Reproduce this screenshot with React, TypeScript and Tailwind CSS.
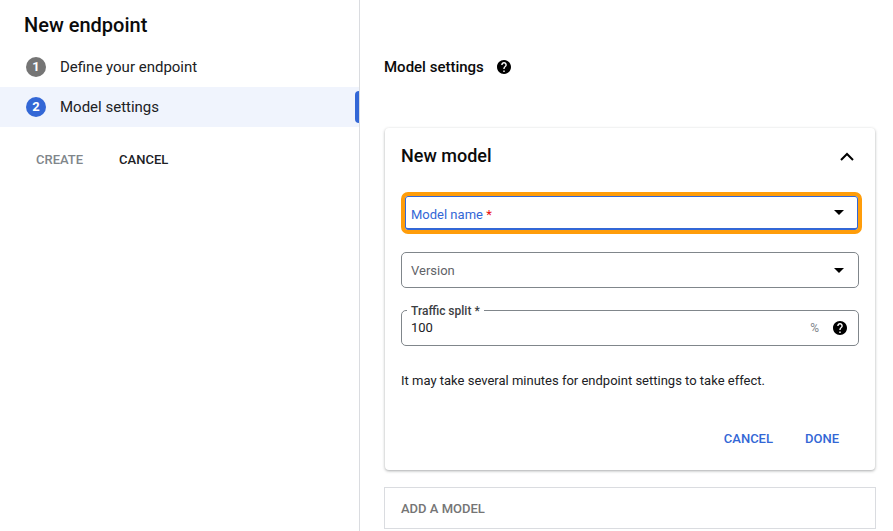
import React from 'react';

function HelpIcon({ size = 16 }: { size?: number }) {
    return (
        <svg width={size} height={size} viewBox="2 2 20 20" fill="#000" className="shrink-0">
            <path d="M12 2C6.48 2 2 6.48 2 12s4.48 10 10 10 10-4.48 10-10S17.52 2 12 2zm1 17h-2v-2h2v2zm2.07-7.75l-.9.92C13.45 12.9 13 13.5 13 15h-2v-.5c0-1.1.45-2.1 1.17-2.83l1.24-1.26c.37-.36.59-.86.59-1.41 0-1.1-.9-2-2-2s-2 .9-2 2H8c0-2.21 1.79-4 4-4s4 1.79 4 4c0 .88-.36 1.68-.93 2.25z" />
        </svg>
    );
}

function Caret() {
    return (
        <svg width="10" height="5" viewBox="0 0 10 5" fill="#000" className="shrink-0">
            <path d="M0 0l5 5 5-5z" />
        </svg>
    );
}

function Step({ num, label, active }: { num: number; label: string; active?: boolean }) {
    return (
        <div className={`relative flex h-10 items-center pl-[26px] ${active ? 'bg-[#f0f4fd]' : ''}`}>
            <span className={`flex h-5 w-5 items-center justify-center rounded-full text-[13px] font-bold text-white ${active ? 'bg-[#3367d6]' : 'bg-[#757575]'}`}>
                {num}
            </span>
            <span className="ml-[14px] text-[15px] leading-5 text-[#202124]">{label}</span>
            {active && <span className="absolute right-0 top-1 h-8 w-1 rounded-l-sm bg-[#3367d6]" />}
        </div>
    );
}

export default function App() {
    return (
        <div className="flex h-[531px] w-[893px] overflow-hidden bg-white font-['Roboto',sans-serif] text-[#202124]">
            <aside className="w-[360px] shrink-0 border-r border-[#dadce0]">
                <h1 className="mb-[10px] pl-6 pt-[13px] text-[20px] font-medium leading-6 text-[#0b0b0b]">New endpoint</h1>
                <Step num={1} label="Define your endpoint" />
                <Step num={2} label="Model settings" active />
                <div className="flex items-center gap-9 pl-9 pt-[25px] text-[13px] font-medium leading-4">
                    <span className="text-[#80868b]">CREATE</span>
                    <span className="text-[#202124]">CANCEL</span>
                </div>
            </aside>

            <main className="w-[533px] pl-6">
                <div className="mt-[57px] flex h-5 items-center gap-[13px] text-[15px] font-medium text-[#0b0b0b]">
                    Model settings
                    <HelpIcon size={14} />
                </div>

                <div className="ml-px mt-[51px] h-[342px] w-[490px] rounded bg-white px-4 shadow-[0_1px_3px_rgba(60,64,67,0.45)]">
                    <div className="flex h-[56px] items-center justify-between pr-[5px]">
                        <h2 className="text-lg font-medium text-[#0b0b0b]">New model</h2>
                        <svg width="14" height="9" viewBox="0 0 14 9" fill="none" stroke="#000" strokeWidth="2">
                            <path d="M1 8l6-6 6 6" />
                        </svg>
                    </div>

                    <div className="ml-1 mt-3 flex h-[34px] w-[453px] items-center justify-between rounded-[3px] border-x border-t border-b-2 border-[#3367d6] pl-[5px] pr-[13px] text-[13px] outline-4 outline-[#ff9d0a]">
                        <span className="pt-1 text-[#3367d6]">Model name <span className="text-[#ea0f0f]">*</span></span>
                        <Caret />
                    </div>

                    <div className="mt-[22px] flex h-9 w-[458px] items-center justify-between rounded-[5px] border border-[#80868b] pl-[9px] pr-[14px] text-[13px] text-[#5f6368]">
                        <span className="pt-[2px]">Version</span>
                        <Caret />
                    </div>

                    <div className="relative mt-[22px] flex h-9 w-[458px] items-center justify-between rounded-[5px] border border-[#80868b] pl-[9px] pr-[11px]">
                        <span className="absolute -top-[6px] left-[5px] bg-white px-1 text-xs font-medium leading-3 text-[#3c4043]">Traffic split *</span>
                        <span className="text-[13px] text-[#202124]">100</span>
                        <span className="flex items-center gap-[14px]">
                            <span className="text-xs text-[#80868b]">%</span>
                            <HelpIcon size={14} />
                        </span>
                    </div>

                    <p className="mt-[27px] text-[13px] leading-4 text-[#202124]">It may take several minutes for endpoint settings to take effect.</p>

                    <div className="mt-[42px] flex justify-end gap-8 pr-5 text-[13px] font-medium leading-4 text-[#3367d6]">
                        <span>CANCEL</span>
                        <span>DONE</span>
                    </div>
                </div>

                <div className="mt-[17px] flex h-[42px] w-[492px] items-center border border-[#dadce0] pl-4 pt-[2px] text-[13px] font-medium text-[#757575]">
                    ADD A MODEL
                </div>
            </main>
        </div>
    );
}
